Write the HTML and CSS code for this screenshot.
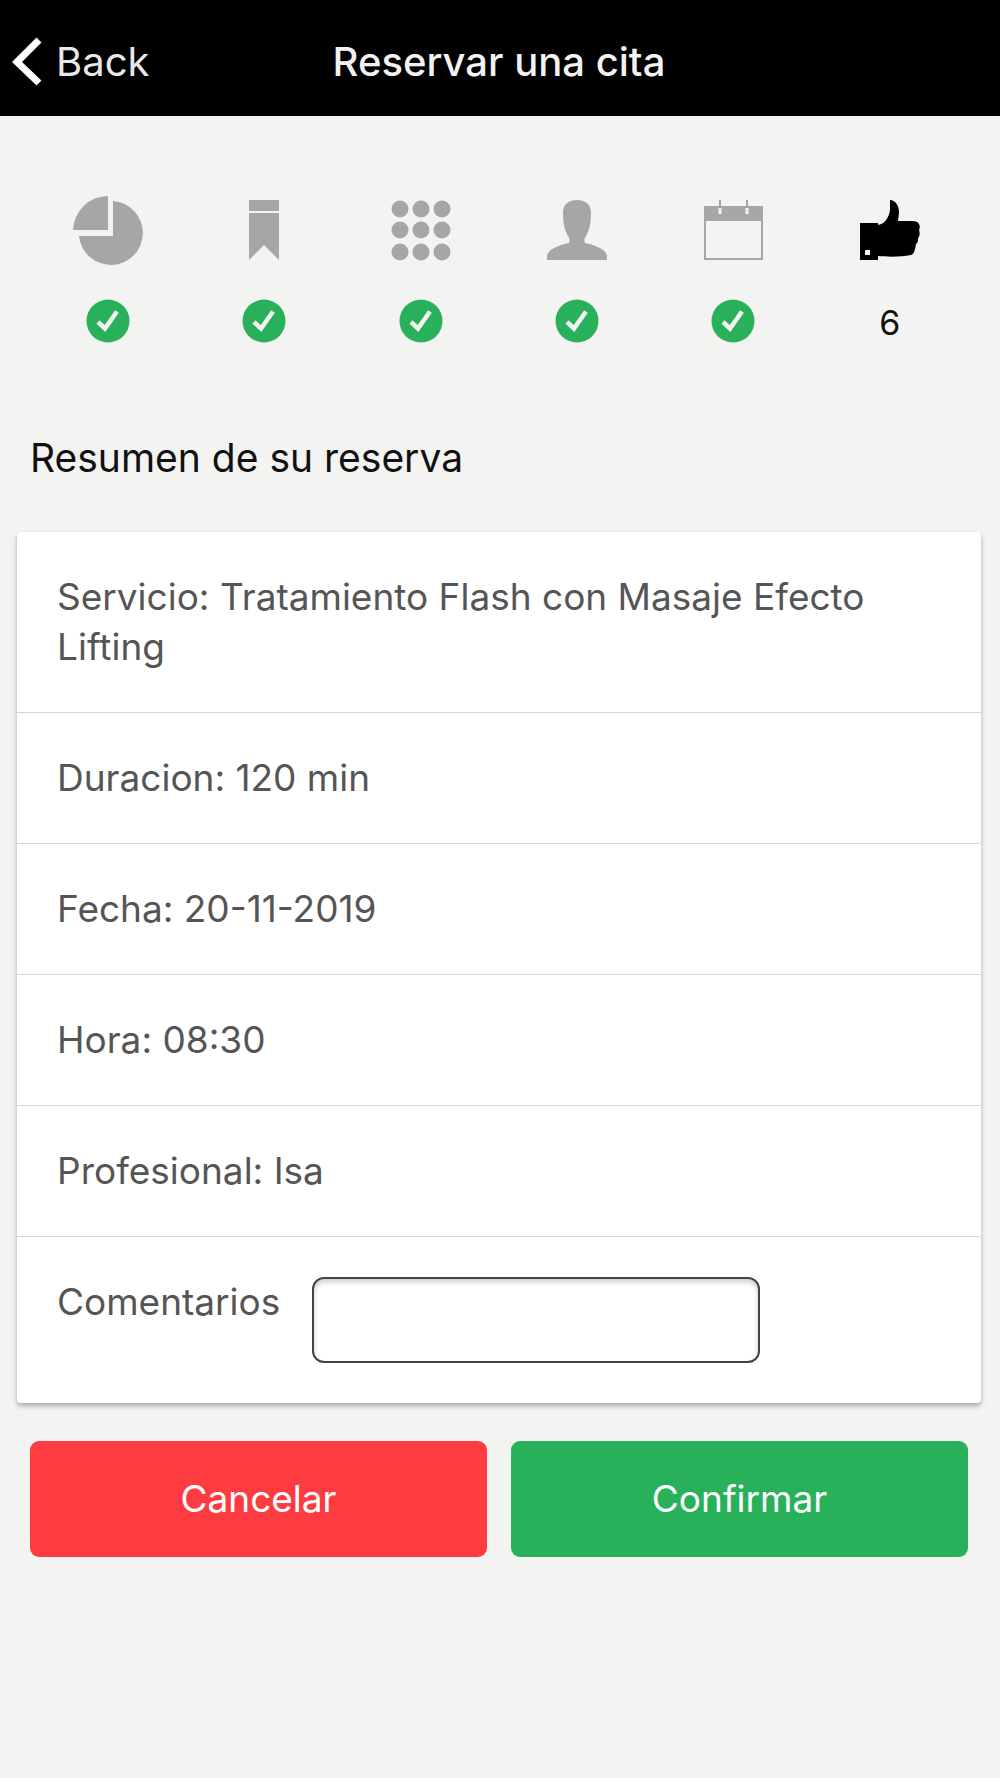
FILE: index.html
```html
<!DOCTYPE html>
<html lang="es">
<head>
    <meta charset="utf-8">
    <meta name="viewport" content="width=device-width, initial-scale=1">
    <title>Reservar una cita</title>
    <link rel="stylesheet" href="styles.css">
</head>
<body>
    <!-- Shared check mark for the finished steps -->
    <svg class="defs" aria-hidden="true">
        <symbol id="check" viewBox="0 0 44 44">
            <circle cx="22" cy="22" r="21.5" fill="#29b05b"/>
            <path d="M12 23l7 6.500 12-17" fill="none" stroke="#f3f3f1" stroke-width="4.5"/>
        </symbol>
    </svg>

    <header class="navbar">
        <a class="back" href="#">
            <svg class="back-icon" viewBox="0 0 30 50" aria-hidden="true">
                <path d="M27 3L5 25l22 21" fill="none" stroke="#fff" stroke-width="7"/>
            </svg>
            Back
        </a>
        <h1 class="title">Reservar una cita</h1>
    </header>

    <main>
        <ol class="steps">
            <li class="step">
                <svg class="step-icon" viewBox="0 0 72 72">
                    <path d="M36 2v34H1A35 35 0 0 1 36 2zM41 7A32 32 0 1 1 7 42h34z"/>
                </svg>
                <svg class="check" role="img" aria-label="Completado"><use href="#check"/></svg>
            </li>
            <li class="step">
                <svg class="step-icon" viewBox="0 0 72 72">
                    <path d="M21 6h30v11H21zM21 19h30v47L36 51 21 66z"/>
                </svg>
                <svg class="check" role="img" aria-label="Completado"><use href="#check"/></svg>
            </li>
            <li class="step">
                <svg class="step-icon" viewBox="0 0 72 72">
                    <circle cx="15" cy="15" r="8.5"/><circle cx="36" cy="15" r="8.5"/><circle cx="57" cy="15" r="8.5"/>
                    <circle cx="15" cy="36" r="8.5"/><circle cx="36" cy="36" r="8.5"/><circle cx="57" cy="36" r="8.5"/>
                    <circle cx="15" cy="58" r="8.5"/><circle cx="36" cy="58" r="8.5"/><circle cx="57" cy="58" r="8.5"/>
                </svg>
                <svg class="check" role="img" aria-label="Completado"><use href="#check"/></svg>
            </li>
            <li class="step">
                <svg class="step-icon" viewBox="0 0 72 72">
                    <path d="M36 6c9 0 14 5 14 13 0 11-2 18-5 23-2 3-2 5-1 7 13 3 22 7 22 14v3H6v-3c0-7 9-11 22-14 1-2 1-4-1-7-3-5-5-12-5-23 0-8 5-13 14-13z"/>
                </svg>
                <svg class="check" role="img" aria-label="Completado"><use href="#check"/></svg>
            </li>
            <li class="step">
                <svg class="step-icon" viewBox="0 0 72 72">
                    <path fill-rule="evenodd" d="M7 12h59v54H7zM9 27v37h55V27zM21.500 14v6h3v-6zM48.500 14v6h3v-6z"/>
                    <path d="M22 6h2v6h-2zM49 6h2v6h-2z"/>
                </svg>
                <svg class="check" role="img" aria-label="Completado"><use href="#check"/></svg>
            </li>
            <li class="step current" aria-current="step">
                <svg class="step-icon" viewBox="0 0 72 72">
                    <path fill-rule="evenodd" d="M6 29h18v2c7-1 11-8 12-15V6c5 0 9 5 9 12 0 4-1 7-1 9h15c6 0 8 5 6 9 1 3 1 6-1 8 0 3 0 5-2 6-1 6-2 10-5 11-10 2-23 2-33 1v4H6zM11 56v5h5v-5z"/>
                </svg>
                <span class="step-number">6</span>
            </li>
        </ol>

        <h2 class="subtitle">Resumen de su reserva</h2>

        <form action="#">
            <ul class="card">
                <li class="item">Servicio: Tratamiento Flash con Masaje Efecto Lifting</li>
                <li class="item">Duracion: 120 min</li>
                <li class="item">Fecha: 20-11-2019</li>
                <li class="item">Hora: 08:30</li>
                <li class="item">Profesional: Isa</li>
                <li class="item item-comments">
                    <label for="comments">Comentarios</label>
                    <input class="comments" type="text" id="comments" name="comments">
                </li>
            </ul>

            <div class="actions">
                <button class="btn btn-cancel" type="button">Cancelar</button>
                <button class="btn btn-confirm" type="submit">Confirmar</button>
            </div>
        </form>
    </main>
</body>
</html>
```
FILE: styles.css
```css
* {
    box-sizing: border-box;
}
body {
    margin: 0;
    background: #f3f3f1;
    color: #111;
    font-family: Inter, "Liberation Sans", sans-serif;
    font-size: 37px;
    line-height: 50px;
}
ul, ol {
    list-style: none;
    margin: 0;
    padding: 0;
}
.defs {
    display: none;
}

/* Top bar */
.navbar {
    display: grid;
    grid-template-columns: 1fr auto 1fr;
    align-items: center;
    height: 116px;
    padding: 8px 14px 0 12px;
    background: #000;
    color: #f2f2f2;
    font-size: 40px;
}
.back {
    display: flex;
    align-items: center;
    gap: 14px;
    color: #e8e8e8;
    text-decoration: none;
}
.back-icon {
    width: 30px;
    height: 50px;
}
.title {
    margin: 0;
    font-size: 40px;
    font-weight: 500;
}

/* Booking steps */
.steps {
    display: flex;
    padding: 78px 32px 0 30px;
}
.step {
    flex: 1;
    display: flex;
    flex-direction: column;
    align-items: center;
    gap: 33px;
}
.step-icon {
    width: 72px;
    height: 72px;
    fill: #a6a6a6;
}
.current .step-icon {
    fill: #000;
}
.check {
    width: 44px;
    height: 44px;
}
.step-number {
    font-size: 34px;
    line-height: 48px;
}

.subtitle {
    margin: 86px 30px 49px;
    font-size: 39px;
    font-weight: 400;
}

/* Summary card */
.card {
    margin: 0 19px 0 17px;
    background: #fff;
    border-radius: 4px;
    box-shadow: 0 3px 5px rgba(0, 0, 0, 0.3);
    color: #555;
}
.item {
    padding: 40px;
    border-bottom: 1px solid #d6d6d6;
}
.item:last-child {
    border-bottom: 0;
}
.item-comments {
    display: flex;
    align-items: flex-start;
    gap: 32px;
}
.comments {
    flex: 0 1 448px;
    min-width: 0;
    height: 86px;
    padding: 0 16px;
    border: 2px solid #444;
    border-radius: 12px;
    background: #fff;
    box-shadow: inset 0 3px 5px rgba(0, 0, 0, 0.2);
    font: inherit;
    color: inherit;
}

/* Buttons */
.actions {
    display: flex;
    gap: 24px;
    padding: 38px 32px 38px 30px;
}
.btn {
    flex: 1;
    height: 116px;
    border: 0;
    border-radius: 9px;
    color: #fff;
    font: inherit;
}
.btn-cancel {
    background: #ff3b42;
}
.btn-confirm {
    background: #29b05b;
}
```
